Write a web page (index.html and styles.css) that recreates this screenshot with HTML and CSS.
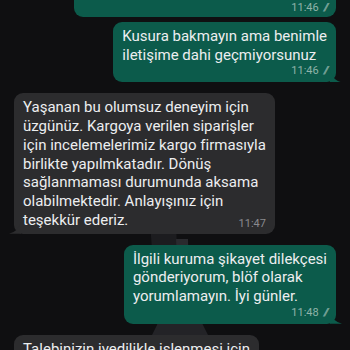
FILE: index.html
```html
<!DOCTYPE html>
<html lang="tr">

<head>
	<meta charset="UTF-8">
	<meta name="viewport" content="width=device-width, initial-scale=1.0">
	<title>Sohbet</title>
	<link rel="stylesheet" href="styles.css">
</head>

<body>
	<div class="chat">
		<svg class="wallpaper" width="350" height="350" viewBox="0 0 350 350">
			<path d="M150 232 L176 232 L180 350 L158 350 Z" fill="#1c1c1f" />
			<path d="M176 250 L188 250 L190 350 L180 350 Z" fill="#2a2a2e" />
			<path d="M160 330 L200 330 L210 350 L150 350 Z" fill="#232327" />
		</svg>
		<div class="messages">
			<div class="bubble out first">
				<div class="meta">11:46 <span class="ticks">//</span></div>
			</div>
			<div class="bubble out">
				<div class="text">Kusura bakmayın ama benimle<br>iletişime dahi geçmiyorsunuz</div>
				<div class="meta">11:46 <span class="ticks">//</span></div>
			</div>
			<div class="bubble in">
				<div class="text">Yaşanan bu olumsuz deneyim için<br>üzgünüz. Kargoya verilen siparişler<br>için incelemelerimiz kargo firmasıyla<br>birlikte yapılmkatadır. Dönüş<br>sağlanmaması durumunda aksama<br>olabilmektedir. Anlayışınız için<br>teşekkür ederiz.<span class="meta inline">11:47</span></div>
			</div>
			<div class="bubble out">
				<div class="text">İlgili kuruma şikayet dilekçesi<br>gönderiyorum, blöf olarak<br>yorumlamayın. İyi günler.</div>
				<div class="meta">11:48 <span class="ticks">//</span></div>
			</div>
			<div class="bubble in">
				<div class="text">Talebinizin ivedilikle işlenmesi için<br>gerekli bilgileri iletiyoruz.</div>
			</div>
		</div>
	</div>
</body>

</html>
```

FILE: styles.css
```css
body,
html {
	margin: 0;
	padding: 0;
	height: 100%;
	background-color: #0f0f11;
	overflow: hidden;
}

.chat {
	position: relative;
	height: 100%;
	font-family: Roboto, "Noto Sans", sans-serif;
	color: #eceef0;
}

.wallpaper {
	position: absolute;
	top: 0;
	left: 0;
}

.messages {
	position: relative;
	display: flex;
	flex-direction: column;
	gap: 11px;
	margin-top: -11px;
	padding: 0 14px;
}

.bubble {
	position: relative;
	padding: 5px 9px 3px;
	border-radius: 9px;
	font-size: 15px;
	line-height: 18.7px;
	max-width: 270px;
}

.bubble.out {
	align-self: flex-end;
	background-color: #0c5b4b;
	padding-bottom: 4px;
}

.bubble.in {
	align-self: flex-start;
	background-color: #2c2c2e;
}

.bubble.first {
	width: 244px;
	height: 19px;
	margin-bottom: -6px;
}

.bubble.out:not(.first)::after {
	content: "";
	position: absolute;
	right: -6px;
	bottom: 0;
	width: 12px;
	height: 12px;
	background-color: #0c5b4b;
	clip-path: path("M0 0 Q3 10 12 12 L0 12 Z");
}

.bubble.in::after {
	content: "";
	position: absolute;
	left: -5px;
	bottom: 0;
	width: 12px;
	height: 12px;
	background-color: #2c2c2e;
	clip-path: path("M12 0 Q9 10 0 12 L12 12 Z");
}

.meta {
	text-align: right;
	font-size: 11px;
	line-height: 14px;
	color: #8fb3a9;
}

.first .meta {
	padding-top: 7px;
}

.ticks {
	font-style: italic;
	letter-spacing: -2px;
	margin-left: 2px;
}

.meta.inline {
	float: right;
	margin: 6px 0 0 20px;
	color: #8a8a8e;
}
```
